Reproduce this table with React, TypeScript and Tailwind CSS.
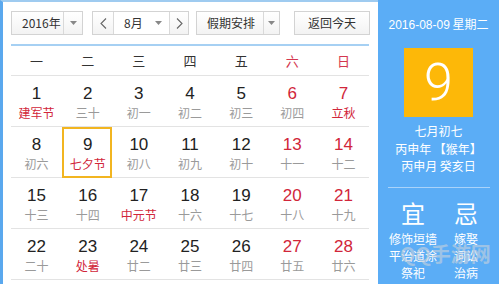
import React from "react";

type Day = { n: number; l: string; red?: boolean; lred?: boolean; sel?: boolean };

const rows: Day[][] = [
  [
    { n: 1, l: "建军节", lred: true },
    { n: 2, l: "三十" },
    { n: 3, l: "初一" },
    { n: 4, l: "初二" },
    { n: 5, l: "初三" },
    { n: 6, l: "初四", red: true },
    { n: 7, l: "立秋", red: true, lred: true },
  ],
  [
    { n: 8, l: "初六" },
    { n: 9, l: "七夕节", lred: true, sel: true },
    { n: 10, l: "初八" },
    { n: 11, l: "初九" },
    { n: 12, l: "初十" },
    { n: 13, l: "十一", red: true },
    { n: 14, l: "十二", red: true },
  ],
  [
    { n: 15, l: "十三" },
    { n: 16, l: "十四" },
    { n: 17, l: "中元节", lred: true },
    { n: 18, l: "十六" },
    { n: 19, l: "十七" },
    { n: 20, l: "十八", red: true },
    { n: 21, l: "十九", red: true },
  ],
  [
    { n: 22, l: "二十" },
    { n: 23, l: "处暑", lred: true },
    { n: 24, l: "廿二" },
    { n: 25, l: "廿三" },
    { n: 26, l: "廿四" },
    { n: 27, l: "廿五", red: true },
    { n: 28, l: "廿六", red: true },
  ],
];

const cjk = { fontFamily: '"Noto Sans CJK SC", "Liberation Sans", sans-serif' };
const num = { fontFamily: '"Liberation Sans", Arial, sans-serif' };

const Caret = () => (
  <svg width="7" height="4" viewBox="0 0 7 4">
    <path d="M0 0 L7 0 L3.5 4 Z" fill="#888" />
  </svg>
);

const Chevron = ({ left }: { left?: boolean }) => (
  <svg width="7" height="11" viewBox="0 0 7 11">
    <path
      d={left ? "M6 0.5 L1 5.5 L6 10.5" : "M1 0.5 L6 5.5 L1 10.5"}
      fill="none"
      stroke="#666"
      strokeWidth="1.1"
    />
  </svg>
);

const btn =
  "h-[24px] shrink-0 border border-[#d3d3d3] bg-gradient-to-b from-white to-[#f3f3f3] flex items-center text-[12px] text-[#333] whitespace-nowrap";

export default function App() {
  return (
    <div className="w-[499px] h-[284px] flex overflow-hidden bg-white" style={cjk}>
      {/* left calendar */}
      <div className="w-[378px] shrink-0 h-full border-l-[3px] border-t-[2px] border-l-[#5aa8ee] border-t-[#9fcbf0] pl-[8px] pr-[9px] pt-[9px] flex flex-col">
        {/* header */}
        <div className="flex items-center h-[24px] shrink-0">
          <div className={`${btn} w-[72px]`}>
            <span className="pl-[10px] w-[51px]">2016年</span>
            <div className="h-full border-l border-[#d9d9d9] flex-1 flex items-center justify-center">
              <Caret />
            </div>
          </div>
          <div className={`${btn} ml-[9px] w-[97px]`}>
            <div className="w-[21px] h-full flex items-center justify-center border-r border-[#d9d9d9]">
              <Chevron left />
            </div>
            <div className="w-[55px] h-full flex items-center pl-[10px] bg-white">
              <span className="flex-1">8月</span>
              <span className="pr-[7px] flex items-center">
                <Caret />
              </span>
            </div>
            <div className="flex-1 h-full flex items-center justify-center border-l border-[#d9d9d9]">
              <Chevron />
            </div>
          </div>
          <div className={`${btn} ml-[7px] w-[84px]`}>
            <span className="pl-[10px] w-[66px]">假期安排</span>
            <div className="h-full border-l border-[#d9d9d9] flex-1 flex items-center justify-center">
              <Caret />
            </div>
          </div>
          <div className={`${btn} ml-[14px] w-[76px] justify-center`}>返回今天</div>
        </div>
        <div className="mt-[9px] h-[2px] shrink-0 bg-[#a6d0f3]" />
        {/* week header */}
        <div className="grid grid-cols-7 h-[30px] shrink-0 border-b border-[#e3e3e3] items-center text-[13px]">
          {["一", "二", "三", "四", "五", "六", "日"].map((w, i) => (
            <div key={w} className={`text-center ${i >= 5 ? "text-[#d4374f]" : "text-[#333]"}`}>
              {w}
            </div>
          ))}
        </div>
        {rows.map((r, ri) => (
          <div key={ri} className="grid grid-cols-7 h-[51px] shrink-0 border-b border-[#e3e3e3]">
            {r.map((d) => (
              <div key={d.n} className="relative flex flex-col items-center pt-[9px]">
                <span
                  className={`text-[17px] leading-[18px] ${d.red ? "text-[#d1263a]" : "text-[#222]"}`}
                  style={num}
                >
                  {d.n}
                </span>
                <span
                  className={`mt-[3px] text-[12px] leading-[14px] whitespace-nowrap ${d.lred ? "text-[#d1263a]" : "text-[#9a9a9a]"}`}
                >
                  {d.l}
                </span>
                {d.sel && (
                  <div className="absolute left-0 right-[1px] top-0 bottom-[-1px] border-2 border-[#f2b520]" />
                )}
              </div>
            ))}
          </div>
        ))}
      </div>
      {/* right panel */}
      <div className="relative flex-1 h-full bg-[#5badf6] text-white flex flex-col items-center overflow-hidden">
        <div className="mt-[15px] shrink-0 text-[12px] leading-[18px] whitespace-nowrap">
          <span style={num}>2016-08-09</span> 星期二
        </div>
        <div className="mt-[14px] shrink-0 w-[69px] h-[69px] bg-[#fdb808] flex items-center justify-center">
          <span
            className="text-[52px] leading-none font-light"
            style={{ fontFamily: "Roboto, 'Liberation Sans', sans-serif" }}
          >
            9
          </span>
        </div>
        <div className="mt-[5px] shrink-0 text-[12px] leading-[17.5px] text-center whitespace-nowrap">
          <div>七月初七</div>
          <div>丙申年 【猴年】</div>
          <div>丙申月 癸亥日</div>
        </div>
        <div className="mt-[12px] shrink-0 w-[102px] h-[1px] bg-[#a9d3fa]" />
        <div className="mt-[9px] shrink-0 w-full flex pl-[10px] text-[12px] leading-[17px] whitespace-nowrap">
          <div className="flex flex-col items-center w-[50px]">
            <div className="text-[24px] leading-[32px] mb-[1px]">宜</div>
            <div>修饰垣墙</div>
            <div>平治道涂</div>
            <div>祭祀</div>
            <div>沐浴</div>
          </div>
          <div className="flex flex-col items-center w-[26px] ml-[15px]">
            <div className="text-[24px] leading-[32px] mb-[1px]">忌</div>
            <div>嫁娶</div>
            <div>词讼</div>
            <div>治病</div>
            <div>置产</div>
          </div>
        </div>
        <div className="absolute left-[22px] top-[243px] text-[20px] leading-[22px] font-bold text-[#c9d2dc] opacity-60 whitespace-nowrap">
          QQ手游网
        </div>
      </div>
    </div>
  );
}
